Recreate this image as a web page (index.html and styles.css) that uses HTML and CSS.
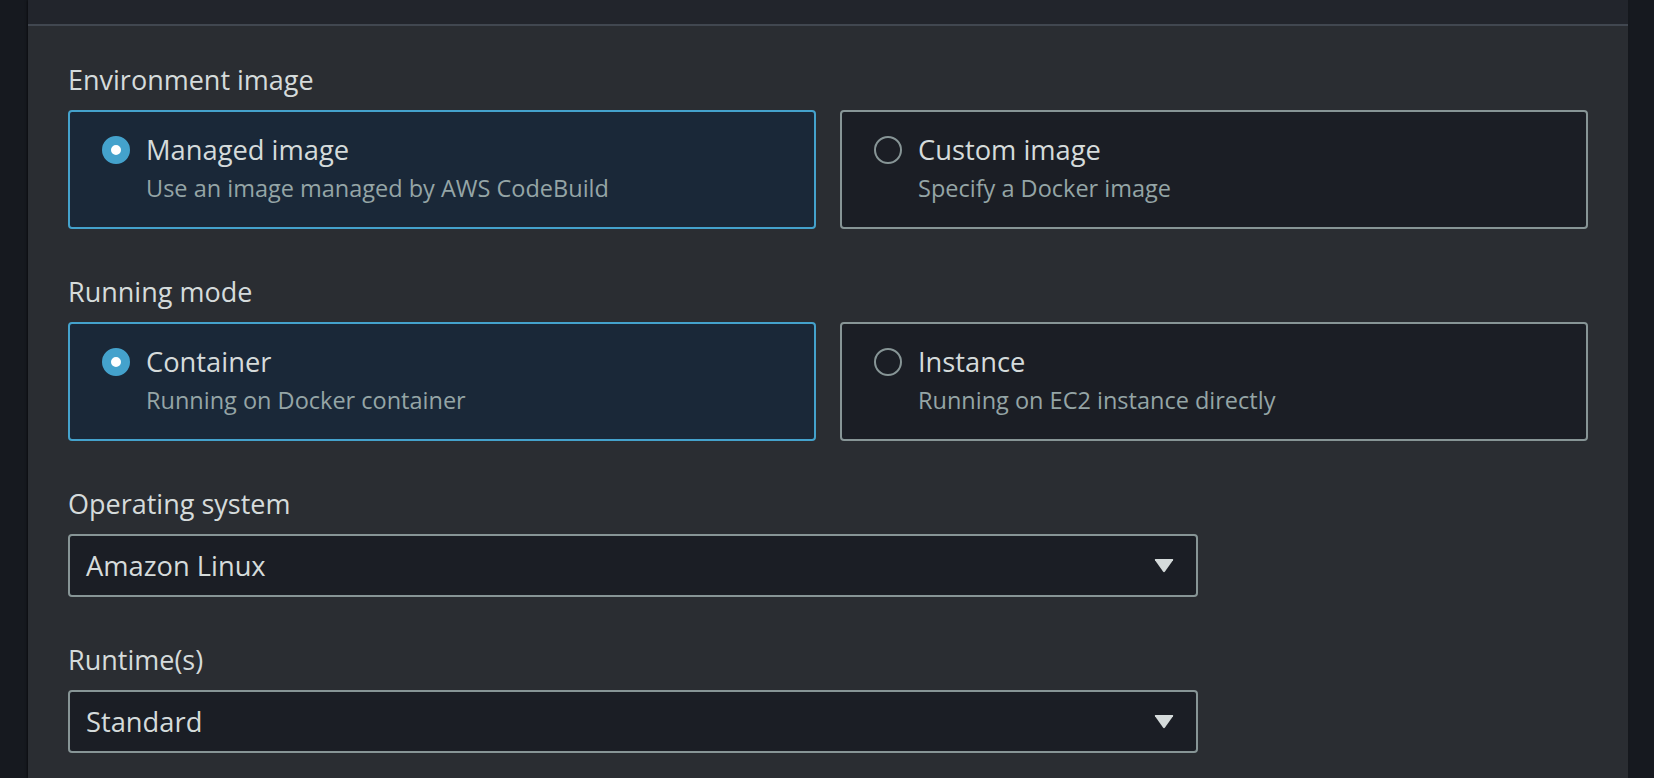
FILE: index.html
```html
<!DOCTYPE html>
<html lang="en">
<head>
<meta charset="utf-8">
<title>Environment</title>
<link rel="stylesheet" href="styles.css">
</head>
<body>
<div class="page">
  <section class="panel">
    <div class="panel-header"></div>
    <div class="panel-body">
      <div class="field">
        <div class="label">Environment image</div>
        <div class="tiles" role="radiogroup">
          <div class="tile selected" role="radio" aria-checked="true">
            <span class="radio on"></span>
            <div class="tile-text">
              <div class="tile-title">Managed image</div>
              <div class="tile-desc">Use an image managed by AWS CodeBuild</div>
            </div>
          </div>
          <div class="tile" role="radio" aria-checked="false">
            <span class="radio"></span>
            <div class="tile-text">
              <div class="tile-title">Custom image</div>
              <div class="tile-desc">Specify a Docker image</div>
            </div>
          </div>
        </div>
      </div>

      <div class="field">
        <div class="label">Running mode</div>
        <div class="tiles" role="radiogroup">
          <div class="tile selected" role="radio" aria-checked="true">
            <span class="radio on"></span>
            <div class="tile-text">
              <div class="tile-title">Container</div>
              <div class="tile-desc">Running on Docker container</div>
            </div>
          </div>
          <div class="tile" role="radio" aria-checked="false">
            <span class="radio"></span>
            <div class="tile-text">
              <div class="tile-title">Instance</div>
              <div class="tile-desc">Running on EC2 instance directly</div>
            </div>
          </div>
        </div>
      </div>

      <div class="field">
        <div class="label">Operating system</div>
        <div class="select" role="combobox">
          <span class="select-value">Amazon Linux</span>
          <svg class="caret" width="20" height="15" viewBox="0 0 20 15"><path d="M1.5 1 H18.5 Q19.6 1 19 2.2 L11 13.6 Q10 15 9 13.6 L1 2.2 Q0.4 1 1.5 1 Z" fill="#d5dbdb"/></svg>
        </div>
      </div>

      <div class="field">
        <div class="label">Runtime(s)</div>
        <div class="select" role="combobox">
          <span class="select-value">Standard</span>
          <svg class="caret" width="20" height="15" viewBox="0 0 20 15"><path d="M1.5 1 H18.5 Q19.6 1 19 2.2 L11 13.6 Q10 15 9 13.6 L1 2.2 Q0.4 1 1.5 1 Z" fill="#d5dbdb"/></svg>
        </div>
      </div>
    </div>
  </section>
</div>
</body>
</html>
```

FILE: styles.css
```css
html, body {
  margin: 0;
  padding: 0;
  background: #16191f;
  height: 100%;
  overflow: hidden;
}

body {
  font-family: "Open Sans", "Noto Sans", "Liberation Sans", sans-serif;
  color: #d5dbdb;
}

.page {
  padding-left: 28px;
  height: 778px;
}

.panel {
  width: 1600px;
  height: 778px;
  background: #2a2d32;
  box-shadow: -1px 0 2px rgba(0, 0, 0, 0.5);
}

.panel-header {
  height: 24px;
  background: #22252c;
  border-bottom: 2px solid #414750;
}

.panel-body {
  padding: 33px 40px 0 40px;
  display: flex;
  flex-direction: column;
  gap: 42px;
}

.field {
  display: flex;
  flex-direction: column;
  gap: 11px;
}

.label {
  font-size: 27px;
  line-height: 40px;
  padding-top: 1px;
  margin-bottom: -1px;
  color: #d5dbdb;
}

.tiles {
  display: grid;
  grid-template-columns: 1fr 1fr;
  gap: 24px;
}

.tile {
  display: flex;
  align-items: flex-start;
  gap: 16px;
  height: 119px;
  box-sizing: border-box;
  padding: 18px 32px 0 32px;
  border: 2px solid #879596;
  border-radius: 4px;
  background: #1b1e25;
}

.tile.selected {
  border-color: #44a2cc;
  background: #1a2838;
}

.radio {
  flex: none;
  width: 28px;
  height: 28px;
  margin-top: 6px;
  box-sizing: border-box;
  border-radius: 50%;
  border: 2px solid #879596;
}

.radio.on {
  border: 9px solid #44a2cc;
  background: #ffffff;
}

.tile-title {
  font-size: 27.3px;
  line-height: 40px;
  color: #d5dbdb;
}

.tile-desc {
  font-size: 23.5px;
  line-height: 36px;
  color: #95a5a6;
}

.select {
  width: 1130px;
  height: 63px;
  box-sizing: border-box;
  border: 2px solid #879596;
  border-radius: 4px;
  background: #1b1e25;
  display: flex;
  align-items: center;
  justify-content: space-between;
  padding: 0 22px 0 16px;
}

.select-value {
  font-size: 27.3px;
  line-height: 40px;
  color: #d5dbdb;
}

.caret {
  display: block;
}
```
